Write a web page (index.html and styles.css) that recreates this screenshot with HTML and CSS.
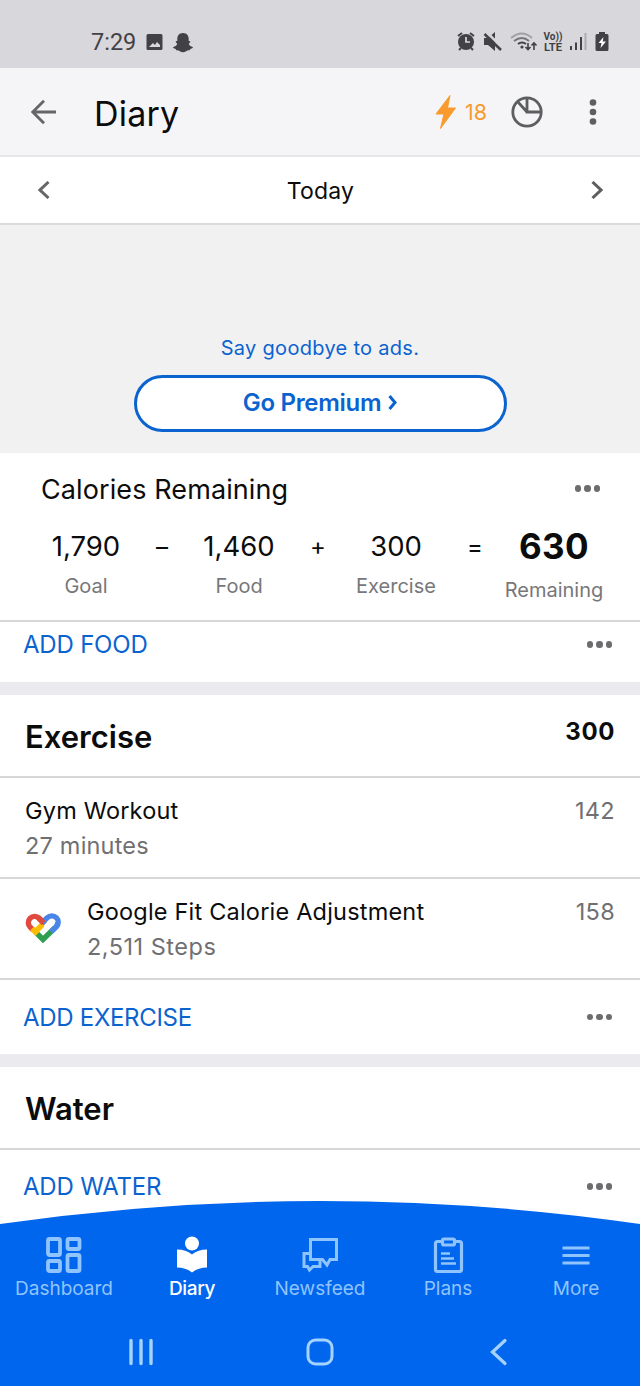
FILE: index.html
```html
<!DOCTYPE html>
<html lang="en">
<head>
    <meta charset="UTF-8">
    <meta name="viewport" content="width=device-width, initial-scale=1.0">
    <title>Diary</title>
    <link rel="stylesheet" href="styles.css">
</head>
<body>
    <div class="status-bar">
        <span class="clock">7:29</span>
        <svg class="status-left" width="50" height="24" viewBox="0 0 50 24" fill="#424246">
            <path fill-rule="evenodd" d="M3 4h13q1.500 0 1.500 1.500v13q0 1.500-1.500 1.500h-13q-1.500 0-1.500-1.500v-13q0-1.500 1.500-1.500zM4 17h11v-2l-3-3-2 3-2-2-4 4z"/>
            <path d="M38 3c4 0 5.700 2.800 5.700 5.800v2.200c1.300-.5 2.300.8 1 1.700-1.700 1.100-.8 2.800 3 4.400.8.400-.3 1.500-2.400 1.800l-.6 1.300c-3-.5-3.700 2-6.700 2s-3.700-2.500-6.700-2l-.6-1.300c-2.100-.3-3.200-1.400-2.400-1.800 3.800-1.600 4.700-3.300 3-4.400-1.300-.9-.3-2.200 1-1.700v-2.200c0-3 1.700-5.800 5.700-5.800z"/>
        </svg>
        <div class="status-right">
            <svg width="160" height="26" viewBox="0 0 160 26" fill="#424246">
                <!-- alarm -->
                <circle cx="14" cy="14" r="8"/>
                <path d="M6 8l4-3M22 8l-4-3M9 20l-2 2M19 20l2 2" stroke="#424246" stroke-width="2"/>
                <path d="M14 9v5h4" fill="none" stroke="#d8d7dc" stroke-width="1.700"/>
                <!-- muted speaker -->
                <path d="M32 10h4l7-6v19l-7-6h-4z"/>
                <path d="M34 3.500l16 16" stroke="#d8d7dc" stroke-width="2.500"/>
                <path d="M32.500 6l16.500 16" stroke="#424246" stroke-width="2.500"/>
                <!-- wifi -->
                <g fill="none" stroke-width="2">
                    <path d="M59 10q11-9 21 0" stroke="#a09fa4"/>
                    <path d="M62 13q8-6 15 0" stroke="#77777b"/>
                    <path d="M66 16q4-3 8 0" stroke="#424246"/>
                    <path d="M76 15v6.500m-2.500-2.500l2.500 2.500 2.500-2.500M82 22v-7m-2.500 2.500l2.500-2.500 2.500 2.500" stroke="#424246" stroke-width="1.600"/>
                </g>
                <circle cx="70" cy="19" r="1.600"/>
                <text class="volte" x="91.500" y="12" textLength="19" lengthAdjust="spacingAndGlyphs">Vo))</text>
                <text class="volte" x="92" y="22.500" textLength="18" lengthAdjust="spacingAndGlyphs">LTE</text>
                <!-- signal -->
                <path d="M118 18h2v4h-2zM123 14.500h2v7.500h-2zM128 9h2v13h-2z"/>
                <path d="M132.500 5h2v17h-2z" fill="#adacb1"/>
                <!-- battery -->
                <path d="M147 4h6v2h2q1.500 0 1.500 1.500v14q0 1.500-1.500 1.500h-10q-1.500 0-1.500-1.500v-14q0-1.500 1.500-1.500h2z"/>
                <path d="M151.500 9l-5 6h3l-1 5 5.500-6.500h-3.300z" fill="#fff"/>
            </svg>
        </div>
    </div>

    <div class="header">
        <svg class="back" width="26" height="26" viewBox="0 0 26 26" fill="none" stroke="#666" stroke-width="2.800">
            <path d="M25 13H2M13 1.800L1.800 13 13 24.200"/>
        </svg>
        <h1 class="title">Diary</h1>
        <svg class="bolt" width="22" height="36" viewBox="0 0 22 36" fill="#f89b2c">
            <path d="M15 1.500L1 20h8L5.500 34.500 20.500 14h-8z" stroke="#f89b2c" stroke-linejoin="round"/>
        </svg>
        <span class="streak">18</span>
        <svg class="pie" width="32" height="32" viewBox="0 0 32 32" fill="none" stroke="#5d5e60" stroke-width="2.800">
            <circle cx="16" cy="16" r="14.200"/>
            <path d="M16 2v14h14M16 16L6.500 5.500"/>
        </svg>
        <svg class="kebab" width="8" height="28" viewBox="0 0 8 28" fill="#5d5e60">
            <circle cx="4" cy="4.500" r="3.300"/><circle cx="4" cy="14" r="3.300"/><circle cx="4" cy="23.500" r="3.300"/>
        </svg>
    </div>

    <div class="date-bar">
        <svg width="12" height="18" viewBox="0 0 12 18" fill="none" stroke="#666" stroke-width="3"><path d="M10.500 1L2 9l8.500 8"/></svg>
        <span class="date">Today</span>
        <svg width="12" height="18" viewBox="0 0 12 18" fill="none" stroke="#5d5e60" stroke-width="3"><path d="M1.500 1L10 9l-8.500 8"/></svg>
    </div>

    <div class="ad">
        <span class="ad-text">Say goodbye to ads.</span>
        <button class="premium"><span class="premium-text">Go Premium</span>
            <svg width="9" height="15" viewBox="0 0 9 15" fill="none" stroke="#0b63d0" stroke-width="3"><path d="M1.500 1L7 7.500 1.500 14"/></svg>
        </button>
    </div>

    <div class="summary">
        <div class="summary-top">
            <span class="summary-title">Calories Remaining</span>
            <span class="dots"><i></i><i></i><i></i></span>
        </div>
        <div class="equation">
            <div class="part"><span class="num">1,790</span><span class="label">Goal</span></div>
            <span class="sign">–</span>
            <div class="part"><span class="num">1,460</span><span class="label">Food</span></div>
            <span class="sign">+</span>
            <div class="part"><span class="num">300</span><span class="label">Exercise</span></div>
            <span class="sign">=</span>
            <div class="part"><span class="num total">630</span><span class="label">Remaining</span></div>
        </div>
    </div>

    <div class="add-row add-food">
        <a class="add">ADD FOOD</a>
        <span class="dots"><i></i><i></i><i></i></span>
    </div>

    <div class="section-title">
        <h2>Exercise</h2>
        <span class="section-total">300</span>
    </div>
    <div class="entry">
        <div class="entry-text">
            <span class="name">Gym Workout</span>
            <span class="detail">27 minutes</span>
        </div>
        <span class="cals">142</span>
    </div>
    <div class="entry">
        <svg class="fit" width="36" height="31" viewBox="0 0 36 31" fill="none" stroke-width="5.400">
            <path d="M8 17L5.200 14.200a6.300 6.300 0 0 1 9-9L20 11" stroke="#e04a3f"/>
            <path d="M30.500 14.500l.8-.8a6.300 6.300 0 0 0-9-9L17 10" stroke="#4a86e8"/>
            <path d="M11 19.500l7 7L30 14.800" stroke="#2f9e4f"/>
            <path d="M26 18.700l5.300-5a6.300 6.300 0 0 0 1.200-5" stroke="#4a86e8"/>
            <path d="M7 15.500l5.500 5.500" stroke="#fbbc04"/>
            <path d="M10 19l7.500-7.500" stroke="#fbbc04"/>
            <path d="M13 4.500l5.500 5.500" stroke="#e04a3f"/>
        </svg>
        <div class="entry-text">
            <span class="name">Google Fit Calorie Adjustment</span>
            <span class="detail steps">2,511 Steps</span>
        </div>
        <span class="cals">158</span>
    </div>
    <div class="add-row add-exercise">
        <a class="add">ADD EXERCISE</a>
        <span class="dots"><i></i><i></i><i></i></span>
    </div>

    <div class="section-title">
        <h2>Water</h2>
    </div>
    <div class="add-row add-water">
        <a class="add">ADD WATER</a>
        <span class="dots"><i></i><i></i><i></i></span>
    </div>

    <div class="bottom">
        <svg class="curve" width="640" height="185" viewBox="0 0 640 185" fill="#0066ee">
            <path d="M0 23Q160 0 320 0T640 23V185H0z"/>
        </svg>
        <div class="tabs">
            <div class="tab">
                <svg width="38" height="38" viewBox="0 0 38 38" fill="none" stroke="#8fc4ff" stroke-width="3.800">
                    <rect x="3" y="4" width="12" height="16" rx="1.500"/><rect x="22.500" y="4" width="12" height="10" rx="1.500"/>
                    <rect x="3" y="26" width="12" height="10" rx="1.500"/><rect x="22.500" y="20" width="12" height="16" rx="1.500"/>
                </svg>
                <span>Dashboard</span>
            </div>
            <div class="tab active">
                <svg width="38" height="38" viewBox="0 0 38 38" fill="#fff">
                    <circle cx="19" cy="8.500" r="7"/>
                    <path d="M4 14.500q9 0 15 5 6-5 15-5v18q-9 0-15 5-6-5-15-5z"/>
                </svg>
                <span>Diary</span>
            </div>
            <div class="tab">
                <svg width="38" height="38" viewBox="0 0 38 38" fill="none" stroke="#8fc4ff" stroke-width="3">
                    <path d="M9.500 4.500h26v20h-6.500l-3 5.500-4.500-5.500h-12z"/>
                    <path d="M9 18.500H3v13H6.500l2 3.500 3.500-3.500h7V25"/>
                </svg>
                <span>Newsfeed</span>
            </div>
            <div class="tab">
                <svg width="38" height="38" viewBox="0 0 38 38" fill="none" stroke="#8fc4ff" stroke-width="3.200">
                    <path d="M13 6.500H8.500q-2 0-2 2v26q0 2 2 2h22q2 0 2-2V8.500q0-2-2-2h-4.500"/>
                    <rect x="13.500" y="4" width="12" height="6" rx="1.500"/>
                    <path d="M12 18.500h9M12 23.500h13M12 28.500h15" stroke-width="2.400"/>
                </svg>
                <span>Plans</span>
            </div>
            <div class="tab">
                <svg width="38" height="38" viewBox="0 0 38 38" stroke="#8fc4ff" stroke-width="3">
                    <path d="M5.500 13h27M5.500 20.500h27M5.500 28h27"/>
                </svg>
                <span>More</span>
            </div>
        </div>
        <div class="system-nav">
            <svg width="28" height="28" viewBox="0 0 28 28" stroke="#a5d3ff" stroke-width="3.400" stroke-linecap="round"><path d="M4 2.500v23M14 2.500v23M24 2.500v23"/></svg>
            <svg width="28" height="28" viewBox="0 0 28 28" fill="none" stroke="#a5d3ff" stroke-width="3"><rect x="2" y="2" width="24" height="24" rx="7.500"/></svg>
            <svg width="28" height="28" viewBox="0 0 28 28" fill="none" stroke="#a5d3ff" stroke-width="3.200" stroke-linecap="round"><path d="M20 2.500L7.500 14 20 25.500"/></svg>
        </div>
    </div>
</body>
</html>
```

FILE: styles.css
```css
* {
    box-sizing: border-box;
}
body {
    margin: 0;
    width: 640px;
    height: 1386px;
    overflow: hidden;
    background-color: #fff;
    color: #0c0c0d;
    font-family: Inter, sans-serif;
}
svg {
    display: block;
    flex-shrink: 0;
}
h1, h2 {
    margin: 0;
}
.status-bar {
    display: flex;
    align-items: center;
    height: 68px;
    padding: 16px 28px 0 91px;
    background-color: #d8d7dc;
    color: #424246;
    font-family: Roboto, sans-serif;
}
.clock {
    width: 54px;
    font-size: 23.5px;
    line-height: 24px;
}
.status-right {
    margin-left: auto;
    margin-top: -2px;
}
.volte {
    font-size: 11px;
    font-weight: 700;
}
.header {
    display: flex;
    align-items: center;
    height: 89px;
    padding: 1px 0 0 31px;
    background-color: #f5f5f8;
    border-bottom: 2px solid #e5e6e9;
}
.title {
    width: 341px;
    margin-left: 37px;
    padding-top: 2px;
    font-size: 34px;
    font-weight: 400;
    letter-spacing: 0.2px;
}
.streak {
    width: 24px;
    margin: 0 22px 0 8px;
    color: #f89b2c;
    font-size: 21.5px;
}
.kebab {
    margin-left: 46px;
}
.date-bar {
    display: flex;
    align-items: center;
    justify-content: space-between;
    height: 68px;
    padding: 0 37px 0 38px;
    border-bottom: 2px solid #dadada;
}
.date {
    padding-top: 1px;
    font-size: 23px;
    letter-spacing: 0.2px;
}
.ad {
    display: flex;
    flex-direction: column;
    align-items: center;
    height: 228px;
    padding-top: 110px;
    background-color: #f1f1f1;
    color: #0b63d0;
}
.ad-text {
    height: 40px;
    font-size: 20px;
    line-height: 27px;
    letter-spacing: 0.3px;
}
.premium {
    display: flex;
    align-items: center;
    justify-content: center;
    gap: 7px;
    width: 373px;
    height: 57px;
    padding-bottom: 3px;
    border: 3.5px solid #0b63d0;
    border-radius: 29px;
    background-color: #fff;
    color: #0b63d0;
    font-family: Inter, sans-serif;
    font-size: 24px;
    font-weight: 600;
    letter-spacing: -0.3px;
}
.summary {
    height: 169px;
    padding-top: 19px;
    border-bottom: 2px solid #d7d7d9;
}
.summary-top {
    display: flex;
    justify-content: space-between;
    padding: 0 40px 0 41px;
}
.summary-title {
    font-size: 27px;
    line-height: 36px;
    letter-spacing: 0.1px;
}
.dots {
    display: flex;
    align-items: center;
    gap: 3px;
}
.dots i {
    width: 6.5px;
    height: 6.5px;
    border-radius: 50%;
    background-color: #6d6d6f;
}
.summary-top .dots {
    padding-bottom: 3px;
}
.equation {
    display: grid;
    grid-template-columns: 108px 44px 110px 48px 108px 50px 108px;
    padding: 17px 0 0 32px;
}
.part {
    display: flex;
    flex-direction: column;
    align-items: center;
    white-space: nowrap;
}
.num {
    height: 48px;
    font-size: 27.5px;
    line-height: 42px;
}
.total {
    height: 52px;
    font-size: 35px;
    font-weight: 700;
    line-height: 43px;
    letter-spacing: 0.4px;
}
.label {
    color: #77777a;
    font-size: 20px;
    line-height: 27px;
    letter-spacing: 0;
}
.sign {
    font-size: 24px;
    line-height: 44px;
    text-align: center;
}
.add-row {
    display: flex;
    align-items: center;
    justify-content: space-between;
    padding: 0 28px 0 23px;
    border-bottom: 13px solid #ebebef;
}
.add-food {
    height: 73px;
    padding-bottom: 15px;
}
.add-exercise {
    height: 87px;
}
.add-water {
    height: 75px;
    padding-bottom: 2px;
    border: 0;
}
.add {
    color: #0b63d0;
    font-size: 24px;
    letter-spacing: -0.2px;
}
.add-exercise .add {
    letter-spacing: -0.3px;
}
.section-title {
    display: flex;
    align-items: center;
    justify-content: space-between;
    height: 83px;
    padding: 2px 25px 0;
    border-bottom: 2px solid #d7d7d9;
}
h2 {
    font-size: 31px;
    font-weight: 600;
}
.section-total {
    padding-bottom: 10px;
    font-size: 24px;
    font-weight: 700;
    letter-spacing: 0.6px;
}
.entry {
    display: flex;
    height: 101px;
    padding: 15px 25px 0;
    border-bottom: 2px solid #d7d7d9;
}
.entry-text {
    display: flex;
    flex-direction: column;
    font-size: 23.5px;
    line-height: 35px;
    letter-spacing: 0.2px;
}
.steps {
    letter-spacing: 0.5px;
}
.fit {
    margin: 19px 26px 0 0;
}
.detail, .cals {
    color: #707073;
}
.cals {
    margin-left: auto;
    font-size: 23.5px;
    line-height: 35px;
    letter-spacing: 0.3px;
}
.bottom {
    position: absolute;
    top: 1201px;
    left: 0;
    width: 640px;
    height: 185px;
}
.curve {
    position: absolute;
    z-index: -1;
}
.tabs {
    display: grid;
    grid-template-columns: repeat(5, 128px);
    padding-top: 34px;
}
.tab {
    display: flex;
    flex-direction: column;
    align-items: center;
    color: #8fc4ff;
    font-size: 19px;
    line-height: 32px;
}
.active {
    color: #fff;
    font-weight: 500;
    letter-spacing: -0.4px;
}
.system-nav {
    display: flex;
    justify-content: space-between;
    padding: 33px 127px 0 127px;
}
```
